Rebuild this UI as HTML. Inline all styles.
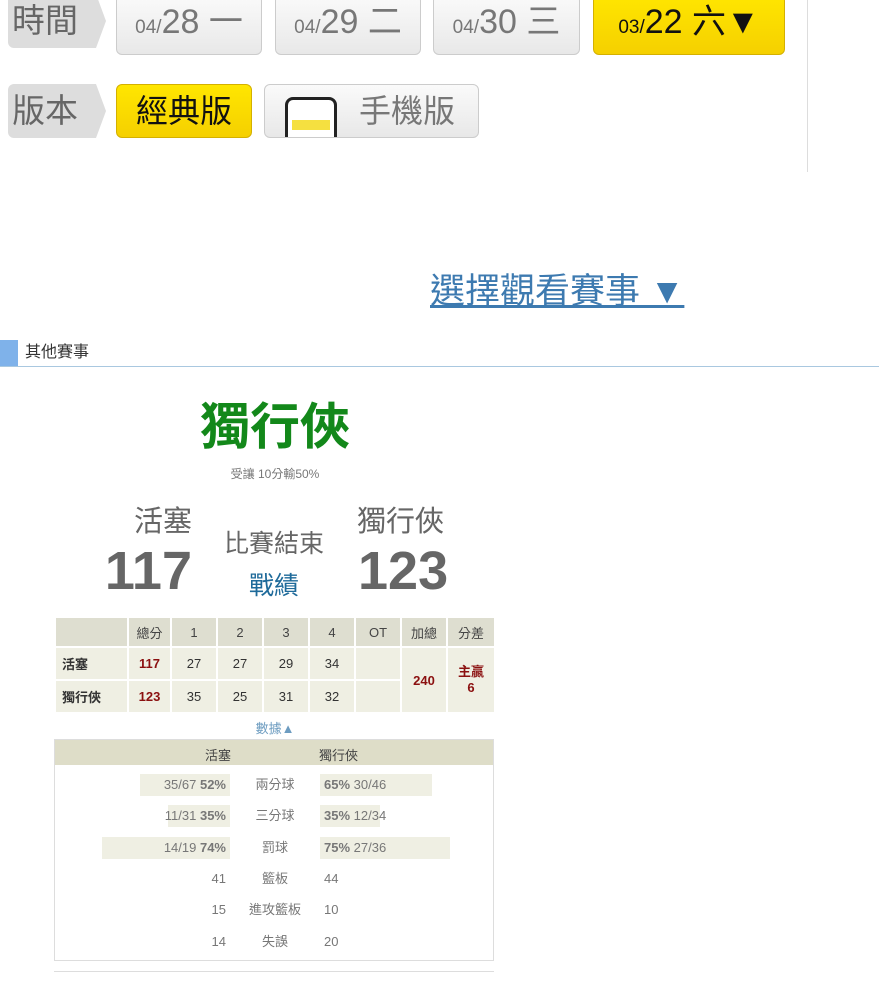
<!DOCTYPE html>
<html><head><meta charset="utf-8"><style>
*{margin:0;padding:0;box-sizing:border-box}
body{width:879px;height:1000px;background:#fff;position:relative;overflow:hidden;font-family:"Liberation Sans","Noto Sans CJK TC",sans-serif;color:#555}
.a{position:absolute}
.lbl{position:absolute;background:#ddd;color:#666;font-size:33px;line-height:54px;padding-left:4px;border-radius:6px 0 0 6px}
.lbl:after{content:"";position:absolute;right:-10px;top:0;border-left:10px solid #ddd;border-top:27px solid transparent;border-bottom:27px solid transparent}
.btn{position:absolute;border:1px solid #ccc;border-radius:6px;background:linear-gradient(#fafafa,#e8e8e8);color:#777;text-align:center;font-size:34px;line-height:52px;overflow:hidden}
.btn small{font-size:19px}
.y{background:linear-gradient(#ffe600,#f5d000);border-color:#d4b000;color:#111}
table{border-collapse:collapse;table-layout:fixed}
.sc{position:absolute;left:54px;top:616px;width:440px;border:2px solid #e5e5dc;font-size:13px;color:#333}
.sc td{border:2px solid #fff;text-align:center;height:33px;background:#efefe3}
.sc tr:first-child td{background:#deded0;height:30px;color:#444}
.r{color:#8b1010;font-weight:bold}
.st{position:absolute;left:54px;top:739px;width:440px;height:222px;border:1px solid #ddd}
.sh{height:25px;background:#deddc8;font-size:13px;color:#444}
.row{position:absolute;font-size:13px;color:#777;height:22px;line-height:22px}
.bar{position:absolute;height:22px;background:#efefe3}
</style></head><body>
<div class="lbl" style="left:8px;top:-6px;width:88px">時間</div>
<div class="btn" style="left:116px;top:-5px;width:146px"><small>04/</small>28 一</div>
<div class="btn" style="left:275px;top:-5px;width:146px"><small>04/</small>29 二</div>
<div class="btn" style="left:433px;top:-5px;width:147px"><small>04/</small>30 三</div>
<div class="btn y" style="left:593px;top:-5px;width:192px"><small>03/</small>22 六▼</div>
<div class="lbl" style="left:8px;top:84px;width:88px">版本</div>
<div class="btn y" style="left:116px;top:84px;width:136px;font-size:32px">經典版</div>
<div class="btn" style="left:264px;top:84px;width:215px;text-align:left;padding-left:94px;font-size:32px">手機版
<div class="a" style="left:20px;top:12px;width:52px;height:46px;border:3px solid #222;border-bottom:none;border-radius:8px 8px 0 0;background:#fff"><div class="a" style="left:4px;top:20px;width:38px;height:10px;background:#f5e040"></div></div></div>
<div class="a" style="left:807px;top:0;width:1px;height:172px;background:#ddd"></div>
<div class="a" style="left:430px;top:270px;font-size:35px;color:#3d7ab0;text-decoration:underline;line-height:44px">選擇觀看賽事 ▼</div>
<div class="a" style="left:0;top:340px;width:18px;height:26px;background:#7fb2ea"></div>
<div class="a" style="left:25px;top:342px;font-size:16px;color:#333;line-height:22px">其他賽事</div>
<div class="a" style="left:0;top:366px;width:879px;height:1px;background:#a9c8e0"></div>
<div class="a" style="left:150px;top:396px;width:250px;text-align:center;font-size:50px;font-weight:bold;color:#13881a;line-height:62px">獨行俠</div>
<div class="a" style="left:150px;top:465px;width:250px;text-align:center;font-size:12px;color:#777">受讓 10分輸50%</div>
<div class="a" style="left:100px;top:498px;width:92px;text-align:right;font-size:29px;color:#666">活塞</div>
<div class="a" style="left:90px;top:538px;width:102px;text-align:right;font-size:54px;font-weight:bold;color:#666;line-height:66px">117</div>
<div class="a" style="left:210px;top:524px;width:128px;text-align:center;font-size:25px;color:#666">比賽結束</div>
<div class="a" style="left:210px;top:566px;width:128px;text-align:center;font-size:25px;color:#1e6a9a">戰績</div>
<div class="a" style="left:357px;top:498px;font-size:29px;color:#666">獨行俠</div>
<div class="a" style="left:358px;top:538px;font-size:54px;font-weight:bold;color:#666;line-height:66px">123</div>
<table class="sc">
<colgroup><col style="width:73px"><col style="width:43px"><col style="width:46px"><col style="width:46px"><col style="width:46px"><col style="width:46px"><col style="width:46px"><col style="width:46px"><col style="width:48px"></colgroup>
<tr><td></td><td>總分</td><td>1</td><td>2</td><td>3</td><td>4</td><td>OT</td><td>加總</td><td>分差</td></tr>
<tr><td style="text-align:left;font-weight:bold;padding-left:6px">活塞</td><td class="r">117</td><td>27</td><td>27</td><td>29</td><td>34</td><td></td><td rowspan="2" class="r">240</td><td rowspan="2" class="r" style="line-height:16px">主贏<br>6</td></tr>
<tr><td style="text-align:left;font-weight:bold;padding-left:6px">獨行俠</td><td class="r">123</td><td>35</td><td>25</td><td>31</td><td>32</td><td></td></tr>
</table>
<div class="a" style="left:200px;top:718px;width:150px;text-align:center;font-size:13px;color:#6d9cc0">數據▲</div>
<div class="st"><div class="sh"><span class="a" style="left:150px;top:5px">活塞</span><span class="a" style="left:264px;top:5px">獨行俠</span></div></div>
<div class="bar" style="left:140px;top:774px;width:90px"></div><div class="bar" style="left:320px;top:774px;width:112px"></div>
<div class="bar" style="left:168px;top:805px;width:62px"></div><div class="bar" style="left:320px;top:805px;width:60px"></div>
<div class="bar" style="left:102px;top:837px;width:128px"></div><div class="bar" style="left:320px;top:837px;width:130px"></div>
<div class="row" style="left:100px;top:774px;width:126px;text-align:right">35/67 <b>52%</b></div><div class="row" style="left:240px;top:774px;width:70px;text-align:center">兩分球</div><div class="row" style="left:324px;top:774px"><b>65%</b> 30/46</div>
<div class="row" style="left:100px;top:805px;width:126px;text-align:right">11/31 <b>35%</b></div><div class="row" style="left:240px;top:805px;width:70px;text-align:center">三分球</div><div class="row" style="left:324px;top:805px"><b>35%</b> 12/34</div>
<div class="row" style="left:100px;top:837px;width:126px;text-align:right">14/19 <b>74%</b></div><div class="row" style="left:240px;top:837px;width:70px;text-align:center">罰球</div><div class="row" style="left:324px;top:837px"><b>75%</b> 27/36</div>
<div class="row" style="left:100px;top:868px;width:126px;text-align:right">41</div><div class="row" style="left:240px;top:868px;width:70px;text-align:center">籃板</div><div class="row" style="left:324px;top:868px">44</div>
<div class="row" style="left:100px;top:899px;width:126px;text-align:right">15</div><div class="row" style="left:240px;top:899px;width:70px;text-align:center">進攻籃板</div><div class="row" style="left:324px;top:899px">10</div>
<div class="row" style="left:100px;top:931px;width:126px;text-align:right">14</div><div class="row" style="left:240px;top:931px;width:70px;text-align:center">失誤</div><div class="row" style="left:324px;top:931px">20</div>
<div class="a" style="left:54px;top:971px;width:440px;height:1px;background:#ddd"></div>
</body></html>
